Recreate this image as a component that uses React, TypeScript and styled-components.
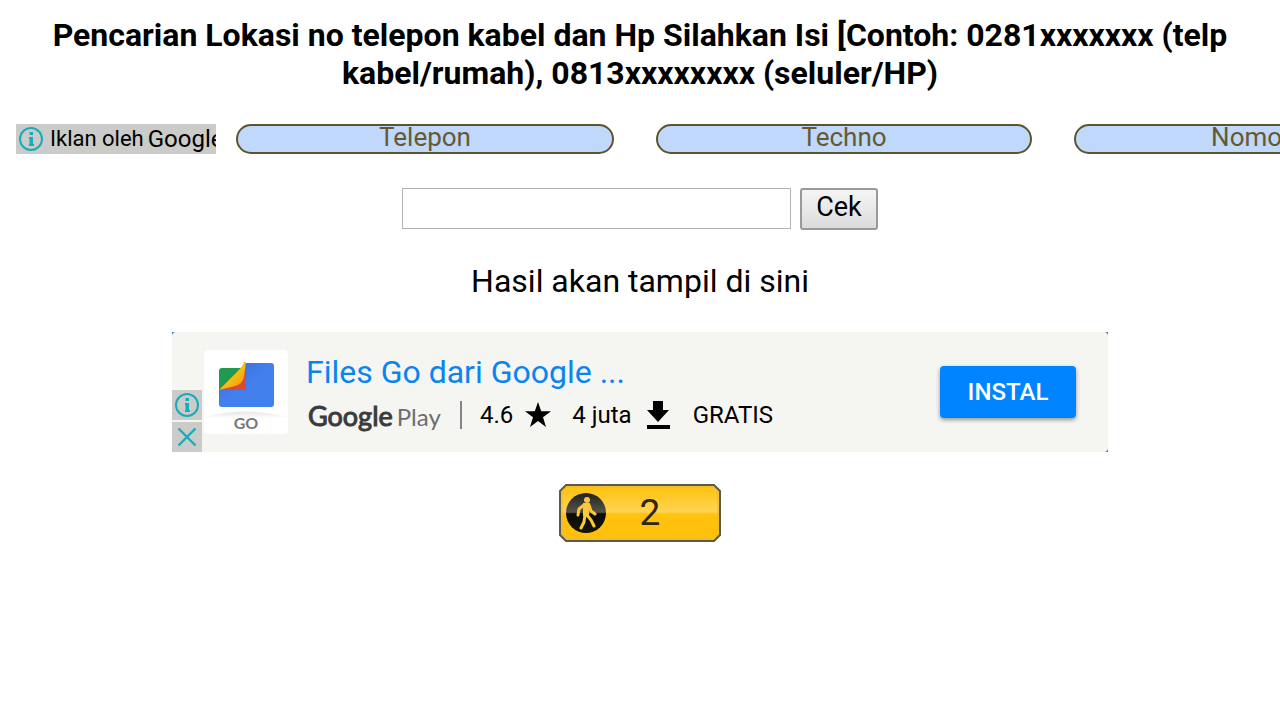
import React from "react";
import styled, { createGlobalStyle } from "styled-components";

const GlobalStyle = createGlobalStyle`
  * { box-sizing: border-box; }
  body {
    margin: 0;
    background: #fff;
    color: #000;
    font-family: Roboto, "Liberation Sans", sans-serif;
  }
  button, input { font-family: inherit; }
`;

const Page = styled.div`
  display: flex;
  flex-direction: column;
  gap: 32px;
  padding: 16px 0;
  overflow: hidden;
`;

const Title = styled.h1`
  margin: 0;
  padding: 0 16px;
  font-size: 32px;
  line-height: 38px;
  font-weight: 700;
  text-align: center;
`;

const LinkStrip = styled.nav`
  display: flex;
  height: 32px;
  padding: 0 0 2px 16px;
  gap: 20px;
`;

const AdLabel = styled.div`
  display: flex;
  align-items: center;
  flex: none;
  width: 200px;
  gap: 4px;
  background: #cbcbc9;
  overflow: hidden;
  white-space: nowrap;
  font-size: 22px;
  line-height: 30px;
`;

const LabelBrand = styled.span`
  font-size: 24px;
`;

const Topics = styled.div`
  display: flex;
  flex: none;
  gap: 42px;
`;

const Topic = styled.a<{ $width: number }>`
  flex: none;
  width: ${(p) => p.$width}px;
  border: 2px solid #5d532c;
  border-radius: 15px;
  background: #bfd8fb;
  color: #665930;
  font-size: 26px;
  line-height: 23px;
  text-align: center;
  text-decoration: none;
`;

const SearchForm = styled.form`
  display: flex;
  justify-content: center;
  align-items: flex-start;
  gap: 9px;
  height: 42px;
`;

const NumberInput = styled.input`
  width: 389px;
  height: 41px;
  padding: 2px 4px;
  border: 1px solid #b2b2b2;
  background: #fff;
  font-size: 27px;
`;

const CheckButton = styled.button`
  height: 42px;
  padding: 0 14px 4px;
  border: 2px solid #999;
  border-radius: 3px;
  background: linear-gradient(#f5f5f5, #dcdcdc);
  color: #000;
  font-size: 27px;
  line-height: 32px;
`;

const Result = styled.p`
  margin: 0;
  font-size: 32px;
  line-height: 38px;
  text-align: center;
`;

const AdFrame = styled.section`
  align-self: center;
  width: 100%;
  max-width: 936px;
  background: #2f6f9f;
`;

const AdBody = styled.div`
  display: flex;
  align-items: center;
  height: 120px;
  padding-right: 32px;
  border-radius: 4px 4px 4px 0;
  background: #f5f5f2;
`;

const AdChoices = styled.div`
  display: flex;
  flex-direction: column;
  align-self: flex-end;
  gap: 2px;
`;

const ChoiceButton = styled.button`
  display: block;
  width: 30px;
  height: 30px;
  padding: 0;
  border: 0;
  background: #cbcbc9;
`;

const Glyph = styled.svg`
  display: block;
  flex: none;
`;

const AppIcon = styled.svg`
  flex: none;
  margin: 0 18px 0 2px;
`;

const AppInfo = styled.div`
  flex: 1;
  padding-top: 4px;
`;

const AppName = styled.a`
  display: block;
  color: #0a84f0;
  font-size: 32px;
  line-height: 42px;
  text-decoration: none;
`;

const Facts = styled.div`
  display: flex;
  align-items: center;
  height: 44px;
  font-size: 24px;
  line-height: 30px;
  white-space: nowrap;
`;

const StoreName = styled.span`
  display: flex;
  align-items: baseline;
  width: 156px;
  height: 28px;
  gap: 4px;
  padding-left: 2px;
  border-right: 2px solid #858585;
  font-family: Lato, Roboto, sans-serif;
  font-size: 24px;
  line-height: 30px;
  color: #6d6d6d;
`;

const StoreBrand = styled.span`
  color: #3b3b3b;
  font-size: 27px;
  -webkit-text-stroke: 1px #3b3b3b;
`;

const Fact = styled.span`
  display: flex;
  align-items: center;
  gap: 12px;
  margin-left: 18px;

  & + & { margin-left: 21px; }
`;

const InstallButton = styled.button`
  width: 136px;
  height: 52px;
  padding: 0;
  border: 0;
  border-radius: 4px;
  background: #0084ff;
  box-shadow: 0 2px 4px rgba(0, 0, 0, 0.4);
  color: #fff;
  font-size: 24px;
  font-weight: 500;
  line-height: 52px;
`;

const Counter = styled.svg`
  display: block;
  align-self: center;
`;

const InfoIcon = () => (
  <Glyph width="30" height="30" viewBox="0 0 30 30" aria-hidden="true">
    <circle cx="15" cy="15" r="11" fill="none" stroke="#16adbb" strokeWidth="2" />
    <path d="M13.500 8h3.500v3h-3.500zM13 13h4v7h1v2h-5v-2h.5v-5H13z" fill="#16adbb" />
  </Glyph>
);

const CloseIcon = () => (
  <Glyph width="30" height="30" viewBox="0 0 30 30" aria-hidden="true">
    <path d="M6.500 6.500l17 17M23.500 6.500l-17 17" fill="none" stroke="#16adbb" strokeWidth="2.400" />
  </Glyph>
);

const topics = [
  { label: "Telepon", width: 378 },
  { label: "Techno", width: 376 },
  { label: "Nomor", width: 354 },
];

export default function App() {
  return (
    <Page>
      <GlobalStyle />
      <Title>
        Pencarian Lokasi no telepon kabel dan Hp Silahkan Isi [Contoh: 0281xxxxxxx (telp
        kabel/rumah), 0813xxxxxxxx (seluler/HP)
      </Title>

      <LinkStrip>
        <AdLabel>
          <InfoIcon />
          <span>Iklan oleh</span>
          <LabelBrand>Google</LabelBrand>
        </AdLabel>
        <Topics>
          {topics.map((t) => (
            <Topic key={t.label} href="#" $width={t.width}>{t.label}</Topic>
          ))}
        </Topics>
      </LinkStrip>

      <SearchForm onSubmit={(e) => e.preventDefault()}>
        <NumberInput type="text" aria-label="Nomor telepon" />
        <CheckButton type="submit">Cek</CheckButton>
      </SearchForm>

      <Result>Hasil akan tampil di sini</Result>

      <AdFrame>
        <AdBody>
          <AdChoices>
            <ChoiceButton aria-label="Info iklan"><InfoIcon /></ChoiceButton>
            <ChoiceButton aria-label="Tutup iklan"><CloseIcon /></ChoiceButton>
          </AdChoices>
          <AppIcon width="84" height="84" viewBox="0 0 84 84" aria-hidden="true">
            <defs>
              <linearGradient id="folder" x1="0" y1="0" x2="1" y2="1">
                <stop offset="0" stopColor="#3768cf" />
                <stop offset="0.5" stopColor="#4280ed" />
              </linearGradient>
              <linearGradient id="fold" x1="0" y1="0" x2="1" y2="1">
                <stop offset="0.4" stopColor="#fbc80d" />
                <stop offset="0.9" stopColor="#ef9c16" />
              </linearGradient>
              <linearGradient id="arc" x1="0" y1="0" x2="0" y2="1">
                <stop offset="0" stopColor="#e6e6e6" />
                <stop offset="0.3" stopColor="#fff" />
              </linearGradient>
            </defs>
            <rect width="84" height="84" rx="4" fill="#fff" />
            <path d="M0 67Q42 56 84 67V80a4 4 0 0 1-4 4H4a4 4 0 0 1-4-4z" fill="url(#arc)" />
            <path d="M42 13H67a3 3 0 0 1 3 3V54a3 3 0 0 1-3 3H18a3 3 0 0 1-3-3V40z" fill="url(#folder)" />
            <path d="M18 18H39L15 41V21a3 3 0 0 1 3-3z" fill="#219a50" />
            <path d="M42 14V40H15z" fill="#db4a37" />
            <path d="M42 12L40 26Q39 34 31 36L15 40 34 21Q39 16 40 12z" fill="url(#fold)" />
            <text x="42" y="79" textAnchor="middle" fontFamily="Lato, sans-serif" fontWeight="700" fontSize="16" fill="#777">GO</text>
          </AppIcon>
          <AppInfo>
            <AppName href="#">Files Go dari Google ...</AppName>
            <Facts>
              <StoreName><StoreBrand>Google</StoreBrand>Play</StoreName>
              <Fact>
                4.6
                <Glyph width="26" height="26" viewBox="0 0 26 26" aria-hidden="true">
                  <path d="M13 0l3.200 9.300H26l-8 6 3 9.700-8-6-8 6 3-9.700-8-6h9.800z" fill="#000" />
                </Glyph>
              </Fact>
              <Fact>
                4 juta
                <Glyph width="28" height="28" viewBox="0 0 28 28" aria-hidden="true">
                  <path d="M9 0h10v9h6L14 21 3 9h6zM3 24h23v4H3z" fill="#000" />
                </Glyph>
              </Fact>
              <Fact>GRATIS</Fact>
            </Facts>
          </AppInfo>
          <InstallButton>INSTAL</InstallButton>
        </AdBody>
      </AdFrame>

      <Counter width="162" height="58" viewBox="0 0 162 58" role="img" aria-label="Pengunjung: 2">
        <defs>
          <linearGradient id="gloss" x1="0" y1="0" x2="0" y2="1">
            <stop offset="0" stopColor="#ffc20e" />
            <stop offset="0.15" stopColor="#ffc61e" />
            <stop offset="0.48" stopColor="#ffd454" />
            <stop offset="0.52" stopColor="#ffc20e" />
            <stop offset="1" stopColor="#ffc00b" />
          </linearGradient>
          <linearGradient id="disc" x1="0" y1="0" x2="0" y2="1">
            <stop offset="0" stopColor="#222" />
            <stop offset="0.48" stopColor="#555348" />
            <stop offset="0.52" stopColor="#0c0c08" />
            <stop offset="1" stopColor="#17150b" />
          </linearGradient>
        </defs>
        <path d="M7 1H155L161 7V51L155 57H7L1 51V7z" fill="url(#gloss)" stroke="#5f5a48" strokeWidth="2" />
        <path d="M8 3H154L159 8V50L154 55H8L3 50V8z" fill="none" stroke="#e5b84a" strokeWidth="1" />
        <circle cx="27" cy="29" r="20" fill="url(#disc)" />
        <circle cx="28" cy="16" r="3" fill="#fcc93a" />
        <path
          d="M25 21L20 25 19 31M30 21L32 27 36 30M26 31L25 38 22 44M28 31L32 36 35 42"
          fill="none" stroke="#fcc93a" strokeWidth="3" strokeLinecap="round" strokeLinejoin="round"
        />
        <path d="M24 19H31L30 32H24z" fill="#fcc93a" />
        <text x="91" y="41" textAnchor="middle" fontFamily="Roboto, sans-serif" fontSize="37" fill="#30270b">2</text>
      </Counter>
    </Page>
  );
}
